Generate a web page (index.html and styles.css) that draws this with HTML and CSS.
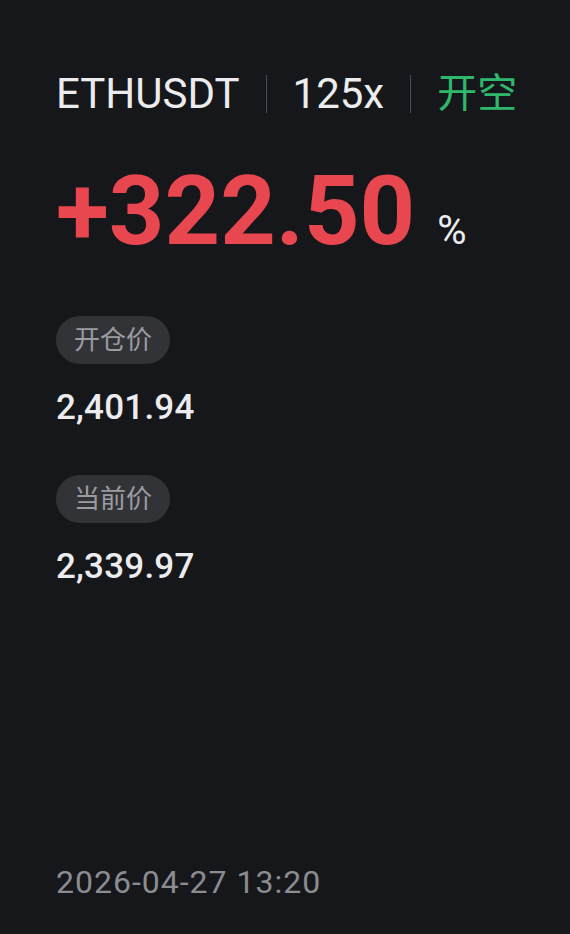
FILE: index.html
```html
<!DOCTYPE html>
<html lang="zh-CN">
<head>
    <meta charset="UTF-8">
    <meta name="viewport" content="width=device-width, initial-scale=1.0">
    <title>ETHUSDT 开空</title>
    <link rel="stylesheet" href="styles.css">
</head>
<body>
    <div class="card">
        <div class="head">
            <span class="symbol">ETHUSDT</span>
            <span class="sep"></span>
            <span class="lev">125x</span>
            <span class="sep"></span>
            <span class="side">开空</span>
        </div>

        <div class="pnl">
            <span class="pnl-value">+322.50</span>
            <span class="pnl-unit">%</span>
        </div>

        <div class="field">
            <span class="tag">开仓价</span>
            <span class="price">2,401.94</span>
        </div>
        <div class="field">
            <span class="tag">当前价</span>
            <span class="price">2,339.97</span>
        </div>

        <div class="time">2026-04-27 13:20</div>
    </div>
</body>
</html>
```

FILE: styles.css
```css
body {
    margin: 0;
    padding: 0;
    background: #16171b;
    font-family: Roboto, "Noto Sans CJK SC", sans-serif;
    color: #ececee;
}
.card {
    height: 934px;
    box-sizing: border-box;
    padding: 69px 0 0 56px;
    display: flex;
    flex-direction: column;
}
.head {
    display: flex;
    align-items: center;
    font-size: 42px;
    line-height: 50px;
}
.sep {
    width: 1px;
    height: 38px;
    background: #4a4b50;
    margin: 0 26px;
}
.side {
    color: #2fb86b;
    font-size: 40px;
}
.pnl {
    display: flex;
    align-items: baseline;
    margin-top: 37px;
}
.pnl-value {
    font-size: 97px;
    font-weight: 700;
    line-height: 110px;
    color: #e9474f;
}
.pnl-unit {
    font-size: 40px;
    margin-left: 22px;
}
.field {
    display: flex;
    flex-direction: column;
    align-items: flex-start;
    margin-top: 50px;
}
.field + .field {
    margin-top: 47px;
}
.tag {
    height: 48px;
    line-height: 48px;
    padding: 0 18px;
    border-radius: 24px;
    background: #323337;
    color: #9b9ca0;
    font-size: 26px;
}
.price {
    margin-top: 24px;
    font-size: 35px;
    font-weight: 500;
    line-height: 40px;
    letter-spacing: 0.2px;
}
.time {
    margin-top: auto;
    margin-bottom: 33px;
    font-size: 32px;
    line-height: 38px;
    letter-spacing: 1px;
    color: #8b8c90;
}
```
